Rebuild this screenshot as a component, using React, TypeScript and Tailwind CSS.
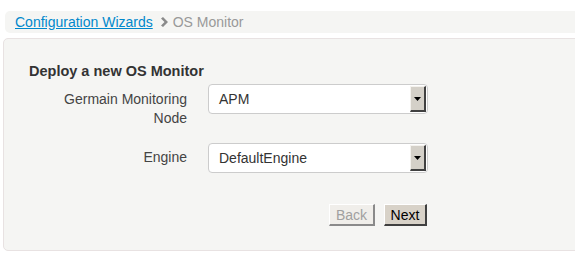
import React from "react";

function Select({ value }: { value: string }) {
  return (
    <div className="flex h-[30px] w-[220px] items-center justify-between rounded-[4px] border border-[#cccccc] bg-white pl-[10px] pr-[1px]">
      <span className="text-[14px] text-[#333333]">{value}</span>
      <div className="flex h-[26px] w-[16px] items-center justify-center border-t border-l border-t-[#f4f2ee] border-l-[#f4f2ee] border-r-2 border-b-2 border-r-[#404040] border-b-[#404040] bg-[#d4d0c8]">
        <svg width="7" height="4" viewBox="0 0 7 4">
          <polygon points="0,0 7,0 3.5,4" fill="#000" />
        </svg>
      </div>
    </div>
  );
}

export default function App() {
  return (
    <div
      className="h-[262px] w-[575px] overflow-hidden bg-white"
      style={{ fontFamily: '"Liberation Sans", Arial, sans-serif' }}
    >
      <div className="ml-[5px] mt-[11px] flex h-[22px] w-[600px] items-center rounded-[5px] bg-[#f5f5f3] pl-[10px] text-[14px]">
        <span className="text-[#0088cc] underline">Configuration Wizards</span>
        <svg className="ml-[8px] mr-[4px]" width="8" height="10" viewBox="0 0 8 10">
          <polygon points="0,1.5 2,0 7,5 2,10 0,8.5 3.5,5" fill="#8a8a8a" />
        </svg>
        <span className="text-[#999999]">OS Monitor</span>
      </div>

      <div className="ml-[3px] mt-[5px] h-[213px] w-[600px] rounded-[5px] border border-[#e8e2e2] bg-[#f5f5f3] pl-[25px] pt-[24px]">
        <div className="text-[14.5px] font-bold leading-[16px] text-[#333333]">Deploy a new OS Monitor</div>
        <div className="mt-[5px] flex">
          <div className="w-[158px] pt-[6px] text-right text-[14px] leading-[19px] text-[#444444]">
            <div className="ml-auto w-[135px]">Germain Monitoring Node</div>
          </div>
          <div className="ml-[21px]">
            <Select value="APM" />
          </div>
        </div>
        <div className="mt-[15px] flex">
          <div className="w-[158px] pt-[5px] text-right text-[14px] leading-[19px] text-[#444444]">Engine</div>
          <div className="ml-[21px]">
            <Select value="DefaultEngine" />
          </div>
        </div>
        <div className="mt-[31px] flex w-[398px] justify-end gap-[9px]">
          <button className="h-[22px] w-[46px] border-t border-l border-t-[#ffffff] border-l-[#ffffff] border-r-2 border-b-2 border-r-[#8a8a8a] border-b-[#8a8a8a] bg-[#f0eeea] text-[14px] text-[#a0a0a0]">
            Back
          </button>
          <button className="h-[22px] w-[43px] border-t border-l border-t-[#ffffff] border-l-[#ffffff] border-r-2 border-b-2 border-r-[#404040] border-b-[#404040] bg-[#d8d2c8] text-[14px] text-[#000000]">
            Next
          </button>
        </div>
      </div>
    </div>
  );
}
